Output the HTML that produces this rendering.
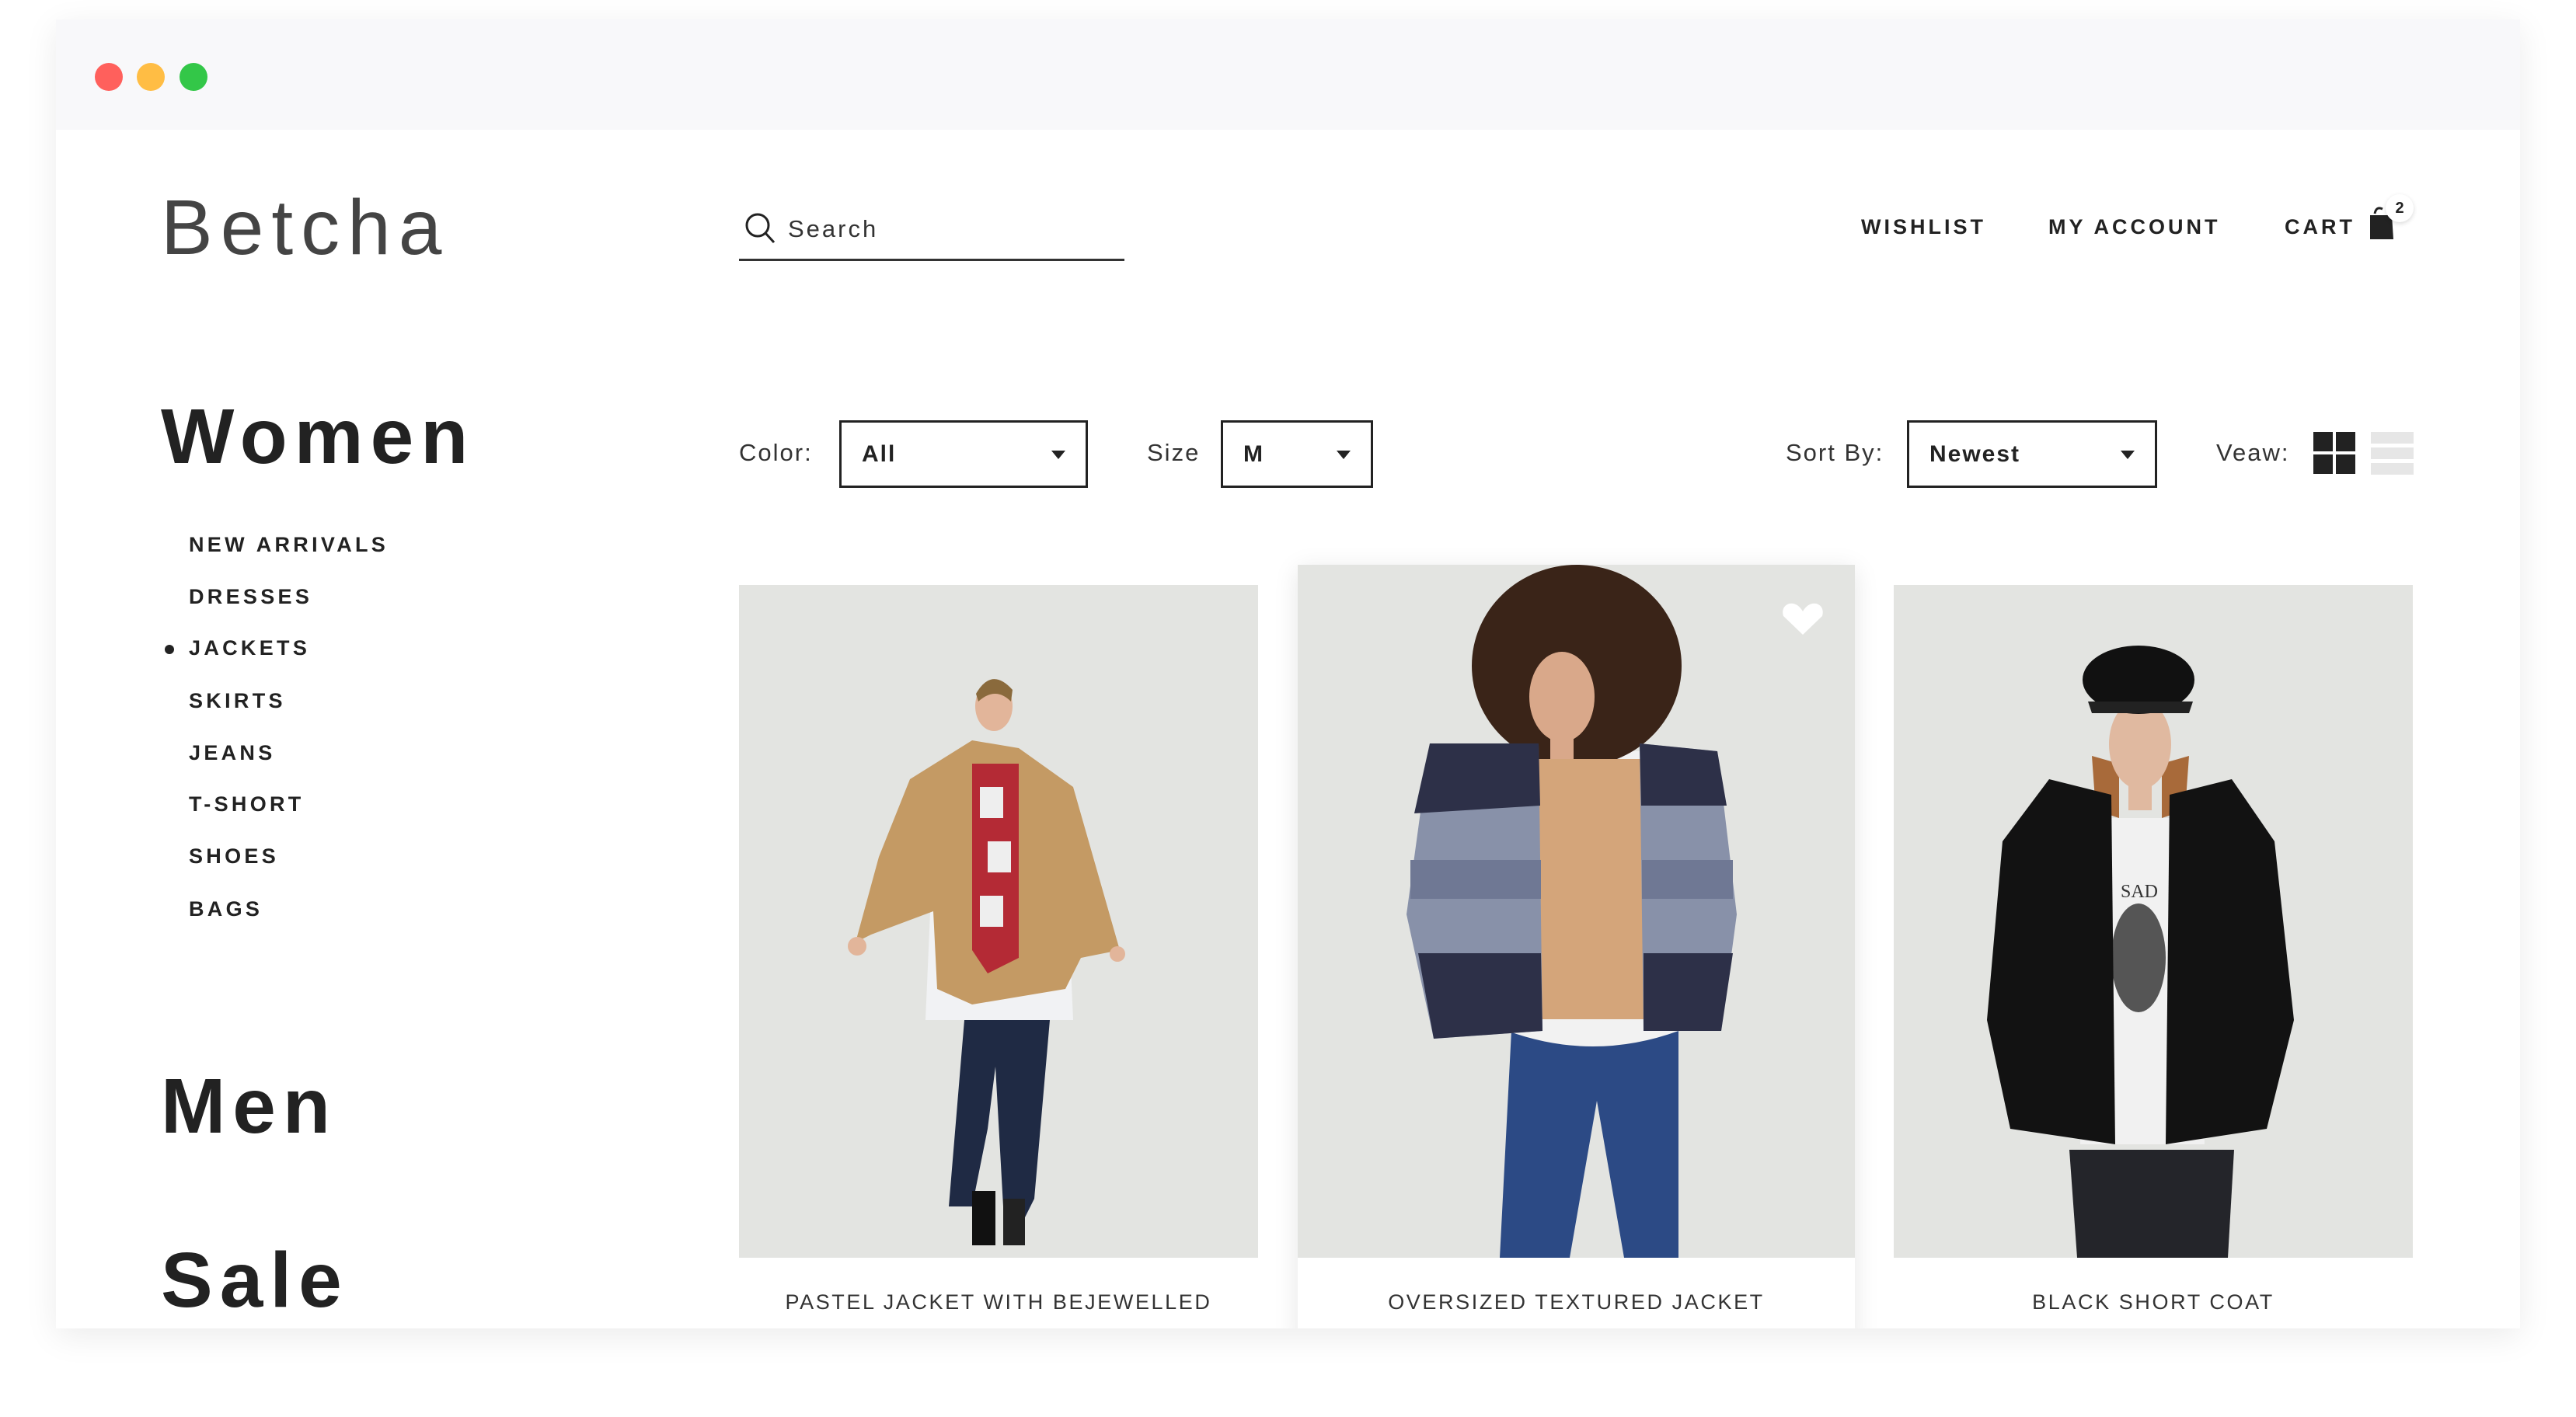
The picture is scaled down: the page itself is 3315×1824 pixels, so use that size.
<!DOCTYPE html>
<html><head><meta charset="utf-8"><style>
*{margin:0;padding:0;box-sizing:border-box}
body{width:3315px;height:1824px;background:#fff;position:relative;overflow:hidden;font-family:"Liberation Sans",sans-serif;color:#222}
.win{position:absolute;left:72px;top:25px;width:3171px;height:1685px;background:#fff;box-shadow:0 10px 40px rgba(0,0,0,0.08);overflow:hidden}
.bar{position:absolute;left:0;top:0;width:100%;height:142px;background:#f8f8fa}
.dot{position:absolute;top:56px;width:36px;height:36px;border-radius:50%}
.a{position:absolute;white-space:nowrap}
.nav{font-weight:bold;font-size:27px;letter-spacing:4px;color:#222}
.cat{font-weight:bold;font-size:27px;letter-spacing:4.3px;left:171px}
.big{font-weight:bold;font-size:100px;letter-spacing:9px;left:135px}
.lbl{font-size:31px;letter-spacing:2px;color:#333}
.sel{position:absolute;border:3px solid #222;height:87px;top:516px}
.sel span{position:absolute;left:26px;top:24px;font-weight:bold;font-size:30px;letter-spacing:2px}
.sel i{position:absolute;right:26px;top:36px;width:0;height:0;border-left:9px solid transparent;border-right:9px solid transparent;border-top:11px solid #222}
.card{position:absolute;background:#e3e4e1;overflow:hidden}
.cap{position:absolute;font-size:27px;letter-spacing:2.6px;color:#333;text-align:center;line-height:44px}
</style></head><body>
<div class="win">
<div class="bar"></div>
<div class="dot" style="left:50px;background:#ff605c"></div>
<div class="dot" style="left:104px;background:#ffbd44"></div>
<div class="dot" style="left:159px;background:#33c748"></div>

<div class="a" style="left:135px;top:208px;font-size:100px;letter-spacing:10px;font-weight:normal;color:#444;line-height:120px">Betcha</div>

<svg class="a" style="left:886px;top:248px" width="40" height="42" viewBox="0 0 40 42"><circle cx="17" cy="17" r="14" fill="none" stroke="#222" stroke-width="3"/><path d="M27 27 L38 39" stroke="#222" stroke-width="3"/></svg>
<div class="a" style="left:942px;top:252px;font-size:31px;letter-spacing:3px;color:#333">Search</div>
<div class="a" style="left:879px;top:308px;width:496px;height:3px;background:#333"></div>

<div class="a nav" style="left:2323px;top:252px">WISHLIST</div>
<div class="a nav" style="left:2564px;top:252px">MY ACCOUNT</div>
<div class="a nav" style="left:2868px;top:252px">CART</div>
<svg class="a" style="left:2976px;top:240px" width="50" height="50" viewBox="0 0 50 50"><path d="M8 10 Q10 0 18 4" fill="none" stroke="#222" stroke-width="3"/><path d="M2 12 L30 12 L32 43 L2 43 Z" fill="#222"/></svg>
<div class="a" style="left:2998px;top:225px;width:36px;height:36px;border-radius:50%;background:#fff;box-shadow:0 2px 6px rgba(0,0,0,.15);font-size:20px;font-weight:bold;text-align:center;line-height:36px">2</div>

<div class="a big" style="top:480px">Women</div>
<div class="a cat" style="top:661px">NEW ARRIVALS</div>
<div class="a cat" style="top:728px">DRESSES</div>
<div class="a" style="left:140px;top:805px;width:12px;height:12px;border-radius:50%;background:#222"></div>
<div class="a cat" style="top:794px">JACKETS</div>
<div class="a cat" style="top:862px">SKIRTS</div>
<div class="a cat" style="top:929px">JEANS</div>
<div class="a cat" style="top:995px">T-SHORT</div>
<div class="a cat" style="top:1062px">SHOES</div>
<div class="a cat" style="top:1130px">BAGS</div>
<div class="a big" style="top:1342px">Men</div>
<div class="a big" style="top:1566px">Sale</div>

<div class="a lbl" style="left:879px;top:540px">Color:</div>
<div class="sel" style="left:1008px;width:320px"><span>All</span><i></i></div>
<div class="a lbl" style="left:1404px;top:540px">Size</div>
<div class="sel" style="left:1499px;width:196px"><span>M</span><i></i></div>
<div class="a lbl" style="left:2226px;top:540px">Sort By:</div>
<div class="sel" style="left:2382px;width:322px"><span>Newest</span><i></i></div>
<div class="a lbl" style="left:2780px;top:540px">Veaw:</div>
<svg class="a" style="left:2905px;top:531px" width="130" height="56" viewBox="0 0 130 56"><rect x="0" y="0" width="25" height="25" fill="#222"/><rect x="29" y="0" width="25" height="25" fill="#222"/><rect x="0" y="29" width="25" height="25" fill="#222"/><rect x="29" y="29" width="25" height="25" fill="#222"/><rect x="74" y="0" width="55" height="15" fill="#e6e6e6"/><rect x="74" y="20" width="55" height="15" fill="#e6e6e6"/><rect x="74" y="40" width="55" height="15" fill="#e6e6e6"/></svg>

<!-- card 1 -->
<div class="card" style="left:879px;top:728px;width:668px;height:866px">
<svg width="668" height="866" viewBox="0 0 668 866">
<path d="M270 800 L290 560 L400 560 L380 790 L360 830 L340 800 L330 620 L320 700 L300 800 Z" fill="#1f2a44"/>
<rect x="300" y="780" width="30" height="70" fill="#111"/><rect x="340" y="790" width="28" height="60" fill="#222"/>
<path d="M250 330 L420 330 L430 560 L240 560 Z" fill="#f1f2f4"/>
<path d="M220 250 L300 200 L360 210 L430 260 L490 470 L440 480 L420 520 L300 540 L255 520 L250 420 L170 450 L150 460 L180 350 Z" fill="#c49a64"/>
<path d="M300 230 L360 230 L360 480 L320 500 L300 470 Z" fill="#b42a35"/>
<path d="M310 260 L340 260 L340 300 L310 300 Z M320 330 L350 330 L350 370 L320 370 Z M310 400 L340 400 L340 440 L310 440 Z" fill="#eee"/>
<ellipse cx="328" cy="156" rx="24" ry="32" fill="#e2b59a"/>
<path d="M305 140 Q325 105 352 135 L350 150 Q330 130 308 150 Z" fill="#8a6a3c"/>
<circle cx="152" cy="465" r="12" fill="#e2b59a"/><circle cx="487" cy="475" r="10" fill="#e2b59a"/>
</svg></div>
<div class="cap" style="left:879px;top:1629px;width:668px">PASTEL JACKET WITH BEJEWELLED<br>COLLAR</div>

<!-- card 2 -->
<div class="a" style="left:1598px;top:702px;width:717px;height:1000px;background:#fff;box-shadow:0 6px 30px rgba(0,0,0,.1)"></div>
<div class="card" style="left:1598px;top:702px;width:717px;height:892px">
<svg width="717" height="892" viewBox="0 0 717 892">
<path d="M275 600 L490 600 L490 892 L420 892 L385 690 L350 892 L260 892 Z" fill="#2c4a85"/>
<path d="M260 240 L470 240 L490 600 Q380 640 270 600 Z" fill="#f2f2f2"/>
<ellipse cx="359" cy="130" rx="135" ry="130" fill="#3a2418"/>
<ellipse cx="340" cy="170" rx="42" ry="58" fill="#d9a88a"/>
<rect x="325" y="215" width="30" height="35" fill="#d9a88a"/>
<path d="M310 250 L445 250 L450 585 L310 585 Z" fill="#d4a57a"/>
<path d="M170 230 L310 230 L315 600 L175 610 L140 450 Z" fill="#8891a9"/>
<path d="M440 230 L540 240 L565 450 L545 600 L445 600 Z" fill="#8891a9"/>
<path d="M170 230 L310 230 L312 310 L150 320 Z M440 230 L540 240 L552 310 L442 310 Z" fill="#2d3048"/>
<path d="M155 500 L313 500 L315 600 L175 610 Z M445 500 L560 500 L545 600 L445 600 Z" fill="#2d3048"/>
<path d="M145 380 L313 380 L313 430 L145 430 Z M443 380 L560 380 L560 430 L443 430 Z" fill="#6f7894"/>
<path d="M650 60 C640 42 620 50 625 66 L650 90 L675 66 C680 50 660 42 650 60 Z" fill="#fff"/>
</svg></div>
<div class="cap" style="left:1598px;top:1629px;width:717px">OVERSIZED TEXTURED JACKET</div>

<!-- card 3 -->
<div class="card" style="left:2365px;top:728px;width:668px;height:866px">
<svg width="668" height="866" viewBox="0 0 668 866">
<path d="M226 727 L438 727 L430 866 L236 866 Z" fill="#24252a"/>
<path d="M250 300 L390 300 L400 720 L240 720 Z" fill="#f1f1f1"/>
<ellipse cx="315" cy="480" rx="35" ry="70" fill="#555"/>
<path d="M255 220 L260 290 L290 300 L290 230 Z M380 220 L375 290 L345 300 L345 230 Z" fill="#a86a3a"/>
<ellipse cx="317" cy="205" rx="40" ry="58" fill="#e0b9a0"/>
<rect x="302" y="250" width="30" height="40" fill="#e0b9a0"/>
<ellipse cx="315" cy="122" rx="72" ry="44" fill="#111"/>
<path d="M250 150 L385 150 L380 165 L255 165 Z" fill="#222"/>
<path d="M200 250 L280 270 L285 720 L150 700 L120 560 L140 330 Z" fill="#121212"/>
<path d="M435 250 L355 270 L350 720 L480 700 L515 560 L490 330 Z" fill="#121212"/>
<rect x="290" y="380" width="50" height="26" fill="#f1f1f1"/>
<text x="292" y="402" font-family="Liberation Serif" font-size="24" fill="#333">SAD</text>
</svg></div>
<div class="cap" style="left:2365px;top:1629px;width:668px">BLACK SHORT COAT</div>
</div>
</body></html>
